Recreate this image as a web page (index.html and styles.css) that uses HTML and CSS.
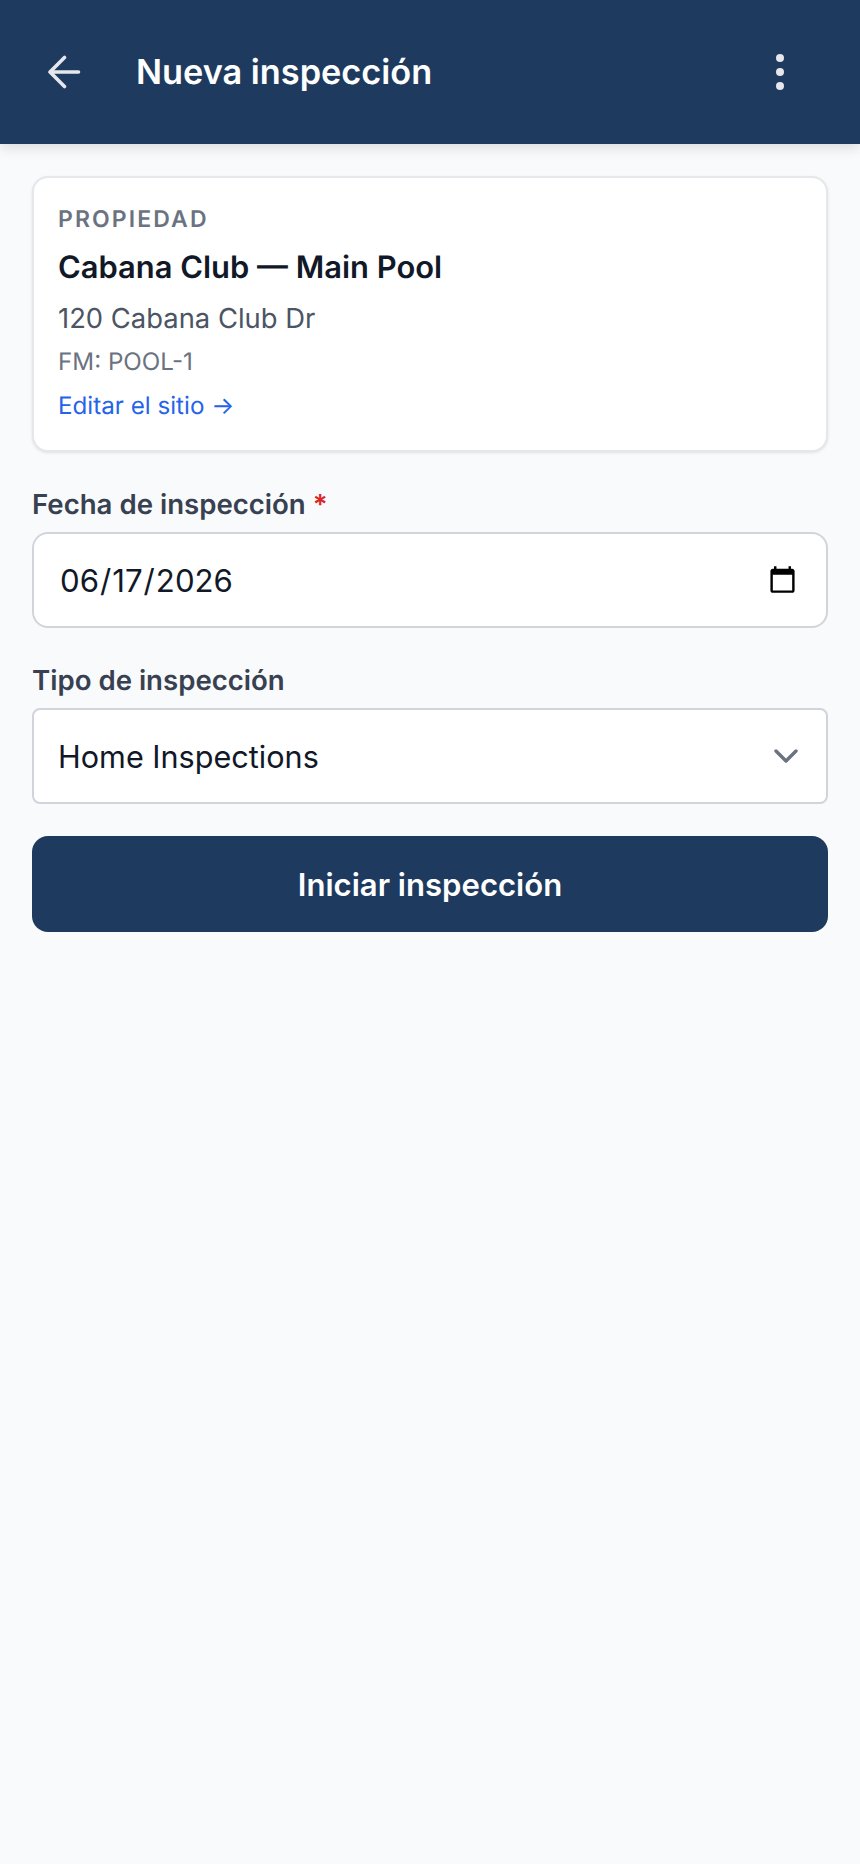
FILE: index.html
```html
<!DOCTYPE html>
<html lang="es">
<head>
<meta charset="UTF-8">
<meta name="viewport" content="width=device-width, initial-scale=1.0">
<title>Nueva inspección</title>
<link rel="stylesheet" href="styles.css">
</head>
<body>

<header class="topbar">
  <button class="icon-btn" type="button" aria-label="Volver">
    <svg class="back-icon" viewBox="0 0 34 34" fill="none" stroke="currentColor" stroke-width="3.6" stroke-linecap="round" stroke-linejoin="round">
      <path d="M31.5 17H3M17.5 2.5 3 17l14.5 14.5"/>
    </svg>
  </button>
  <h1 class="topbar-title">Nueva inspección</h1>
  <button class="icon-btn menu-btn" type="button" aria-label="Menú">
    <span class="dot"></span>
    <span class="dot"></span>
    <span class="dot"></span>
  </button>
</header>

<main class="content">
  <section class="site-card">
    <div class="site-eyebrow">PROPIEDAD</div>
    <div class="site-name">Cabana Club — Main Pool</div>
    <div class="site-address">120 Cabana Club Dr</div>
    <div class="site-code">FM: POOL-1</div>
    <a class="site-link" href="#">Editar el sitio →</a>
  </section>

  <form class="inspection-form">
    <div class="field">
      <label class="field-label" for="date">Fecha de inspección <span class="required">*</span></label>
      <input class="date-input" type="date" id="date" value="2026-06-17" required>
    </div>
    <div class="field">
      <label class="field-label" for="type">Tipo de inspección</label>
      <select class="select-input" id="type">
        <option>Home Inspections</option>
      </select>
    </div>
    <button class="submit-btn" type="submit">Iniciar inspección</button>
  </form>
</main>

</body>
</html>
```

FILE: styles.css
```css
* {
  box-sizing: border-box;
}
body {
  margin: 0;
  min-height: 1864px;
  background-color: #f9fafb;
  font-family: Inter, "Noto Sans", sans-serif;
  color: #111827;
  text-rendering: geometricPrecision;
}
.topbar {
  position: relative;
  display: flex;
  align-items: center;
  height: 144px;
  padding: 0 44px 0 47px;
  background-color: #1e3a5f;
  color: #e5e7eb;
  box-shadow: 0 4px 12px rgba(0, 0, 0, 0.12);
}
.icon-btn {
  display: flex;
  align-items: center;
  justify-content: center;
  padding: 0;
  border: none;
  background: none;
  color: inherit;
}
.back-icon {
  display: block;
  width: 34px;
  height: 34px;
}
.topbar-title {
  flex: 1;
  margin: 0 0 0 55px;
  font-size: 34.3px;
  font-weight: 600;
  color: #ffffff;
}
.menu-btn {
  flex-direction: column;
  gap: 6px;
  margin-right: 32px;
}
.dot {
  width: 8px;
  height: 8px;
  border-radius: 50%;
  background-color: #e5e7eb;
}
.content {
  display: flex;
  flex-direction: column;
  gap: 32px;
  padding: 32px;
}
.site-card {
  display: flex;
  flex-direction: column;
  height: 276px;
  padding: 24px;
  background-color: #ffffff;
  border: 2px solid #e5e7eb;
  border-radius: 16px;
  box-shadow: 0 1px 3px rgba(0, 0, 0, 0.1);
}
.site-eyebrow {
  font-size: 23px;
  line-height: 34px;
  font-weight: 600;
  letter-spacing: 2.1px;
  color: #6b7280;
}
.site-name {
  margin-top: 12px;
  font-size: 30.9px;
  line-height: 40px;
  font-weight: 600;
  color: #111827;
}
.site-address {
  margin-top: 12px;
  font-size: 27.4px;
  line-height: 36px;
  color: #4b5563;
}
.site-code {
  margin-top: 10px;
  font-size: 24.2px;
  line-height: 32px;
  color: #6b7280;
}
.site-link {
  margin-top: 12px;
  font-size: 24.2px;
  line-height: 32px;
  color: #2563eb;
  text-decoration: none;
}
.inspection-form {
  display: flex;
  flex-direction: column;
  gap: 32px;
}
.field {
  display: flex;
  flex-direction: column;
  gap: 8px;
}
.field-label {
  font-size: 27.6px;
  line-height: 40px;
  font-weight: 600;
  color: #374151;
}
.required {
  color: #dc2626;
}
.date-input,
.select-input {
  width: 100%;
  height: 96px;
  background-color: #ffffff;
  border: 2px solid #d1d5db;
  font-family: inherit;
  color: #111827;
}
.date-input {
  padding: 1px 26px 0 25px;
  border-radius: 16px;
  font-size: 31.2px;
}
.select-input {
  padding: 0 24px;
  border-radius: 8px;
  font-size: 30.6px;
  appearance: none;
  background-image: url("data:image/svg+xml,%3Csvg xmlns='http://www.w3.org/2000/svg' viewBox='0 0 24 14' fill='none' stroke='%236b7280' stroke-width='3.4' stroke-linecap='round' stroke-linejoin='round'%3E%3Cpath d='M2 2l10 10L22 2'/%3E%3C/svg%3E");
  background-repeat: no-repeat;
  background-position: right 28px center;
  background-size: 24px 14px;
}
.submit-btn {
  height: 96px;
  padding-top: 2px;
  border: none;
  border-radius: 16px;
  background-color: #1e3a5f;
  color: #ffffff;
  font-family: inherit;
  font-size: 31.1px;
  font-weight: 600;
}
```
